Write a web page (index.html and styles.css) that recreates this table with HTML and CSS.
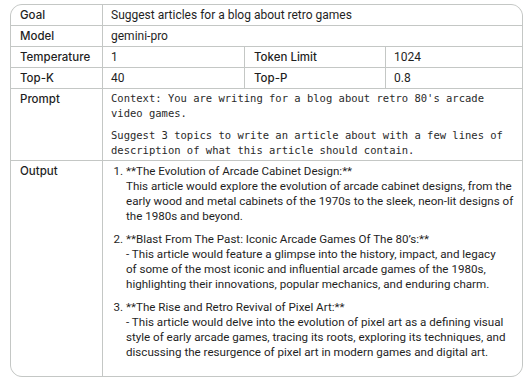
FILE: index.html
```html
<!DOCTYPE html>
<html>
<head>
<meta charset="utf-8">
<link rel="stylesheet" href="styles.css">
</head>
<body>
<div class="table">
  <div class="cell label">Goal</div>
  <div class="cell span3">Suggest articles for a blog about retro games</div>
  <div class="cell label">Model</div>
  <div class="cell span3">gemini-pro</div>
  <div class="cell label">Temperature</div>
  <div class="cell">1</div>
  <div class="cell label">Token Limit</div>
  <div class="cell">1024</div>
  <div class="cell label">Top-K</div>
  <div class="cell">40</div>
  <div class="cell label">Top-P</div>
  <div class="cell">0.8</div>
  <div class="cell label">Prompt</div>
  <div class="cell span3 prompt">
    <p>Context: You are writing for a blog about retro 80's arcade<br>video games.</p>
    <p>Suggest 3 topics to write an article about with a few lines of<br>description of what this article should contain.</p>
  </div>
  <div class="cell label">Output</div>
  <div class="cell span3 output">
    <ol>
      <li>**The Evolution of Arcade Cabinet Design:**<br>This article would explore the evolution of arcade cabinet designs, from the<br>early wood and metal cabinets of the 1970s to the sleek, neon-lit designs of<br>the 1980s and beyond.</li>
      <li>**Blast From The Past: Iconic Arcade Games Of The 80’s:**<br>- This article would feature a glimpse into the history, impact, and legacy<br>of some of the most iconic and influential arcade games of the 1980s,<br>highlighting their innovations, popular mechanics, and enduring charm.</li>
      <li>**The Rise and Retro Revival of Pixel Art:**<br>- This article would delve into the evolution of pixel art as a defining visual<br>style of early arcade games, tracing its roots, exploring its techniques, and<br>discussing the resurgence of pixel art in modern games and digital art.</li>
    </ol>
  </div>
</div>
</body>
</html>
```

FILE: styles.css
```css
html, body {
  margin: 0;
  padding: 0;
  background: #ffffff;
}
body {
  padding: 4px 5px 0 10px;
  font-family: Roboto, "Noto Sans", sans-serif;
  font-size: 12px;
  color: #1f1f1f;
}
.table {
  display: grid;
  grid-template-columns: 91px 141px 140px 1fr;
  gap: 1px;
  background: #c4c7c5;
  border: 1px solid #c4c7c5;
  border-radius: 12px;
  overflow: hidden;
}
.cell {
  background: #ffffff;
  padding: 2px 8px;
  line-height: 16px;
}
.label {
  font-family: Inter, Roboto, sans-serif;
  font-size: 11.5px;
  font-weight: 500;
  padding-left: 9px;
}
.span3 {
  grid-column: span 3;
}
.prompt {
  font-family: "DejaVu Sans Mono", monospace;
  font-size: 10.5px;
  line-height: 15px;
  color: #2a2a2a;
}
.prompt p {
  margin: 0 0 7px 0;
}
.prompt p:last-child {
  margin-bottom: 0;
}
.output {
  font-size: 11.6px;
  line-height: 15px;
  padding: 3px 8px 16px 8px;
  white-space: nowrap;
}
.output ol {
  margin: 0;
  padding-left: 15px;
}
.output li {
  margin-bottom: 8px;
}
.output li:last-child {
  margin-bottom: 0;
}
```
